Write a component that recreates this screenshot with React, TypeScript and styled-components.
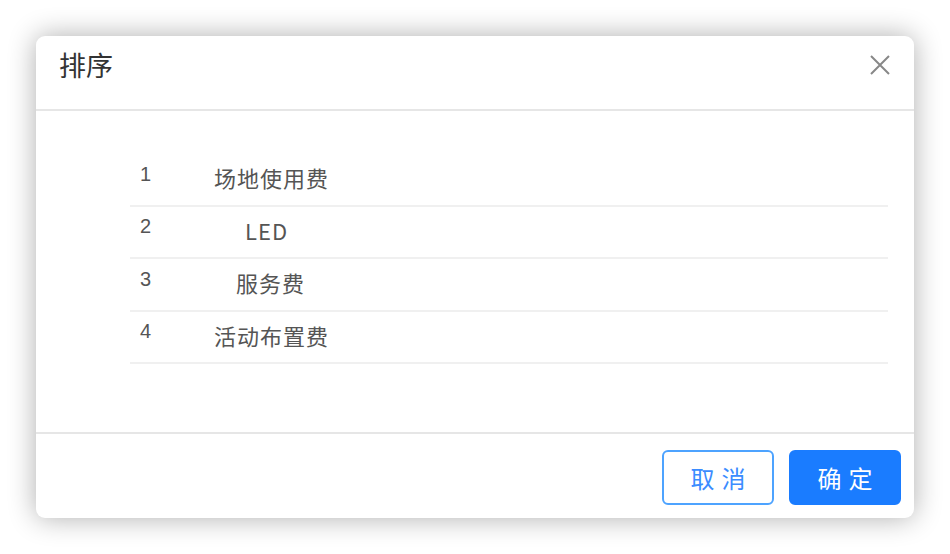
import styled, { createGlobalStyle } from 'styled-components'

const GlobalStyle = createGlobalStyle`
    html, body {
        margin: 0;
        padding: 0;
        background: #fff;
        font-family: "Noto Sans CJK SC", "Noto Sans", sans-serif;
    }
`

const Page = styled.div`
    width: 950px;
    height: 554px;
    padding: 36px;
    box-sizing: border-box;
`

const Dialog = styled.div`
    width: 878px;
    height: 482px;
    background: #fff;
    border-radius: 9px;
    box-shadow: 0 0 28px rgba(0, 0, 0, 0.32);
    display: flex;
    flex-direction: column;
    overflow: hidden;
`

const Header = styled.div`
    height: 75px;
    padding: 10px 22px 0 23px;
    box-sizing: border-box;
    border-bottom: 2px solid #e6e6e6;
    display: flex;
    align-items: flex-start;
    justify-content: space-between;

    h2 {
        margin: 0;
        font-size: 27px;
        line-height: 38px;
        font-weight: 400;
        color: #333;
    }
`

const CloseButton = styled.button`
    border: none;
    background: none;
    padding: 0;
    margin-top: 7px;
    width: 24px;
    height: 24px;
    cursor: pointer;
    color: #888;
`

const Body = styled.div`
    flex: 1;
    padding: 43px 26px 0 94px;
`

const Row = styled.div`
    height: 50.5px;
    border-bottom: 2px solid #f0f0f0;
    display: flex;
    align-items: center;
    font-size: 22px;
    color: #555;
`

const Index = styled.span`
    width: 74px;
    padding-left: 10px;
    margin-bottom: 10px;
    font-family: "Liberation Sans", "Noto Sans", sans-serif;
    font-size: 20px;
`

const Name = styled.span<{ $indent: number }>`
    padding-left: ${p => p.$indent}px;
    margin-bottom: 4px;
    letter-spacing: 1px;
`

const Footer = styled.div`
    height: 86px;
    border-top: 2px solid #e6e6e6;
    box-sizing: border-box;
    padding: 16px 13px 0 0;
    display: flex;
    justify-content: flex-end;
    align-items: flex-start;
    gap: 15px;
`

const Button = styled.button<{ $primary?: boolean }>`
    width: 112px;
    height: 55px;
    border-radius: 6px;
    font-family: "Noto Sans CJK SC", sans-serif;
    font-size: 24px;
    letter-spacing: 7px;
    text-indent: 7px;
    cursor: pointer;
    border: 2px solid ${p => (p.$primary ? '#1a7cff' : '#4da3ff')};
    background: ${p => (p.$primary ? '#1a7cff' : '#fff')};
    color: ${p => (p.$primary ? '#fff' : '#3b8cff')};
`

const items = [
    { name: '场地使用费', indent: 0 },
    { name: 'LED', indent: 31 },
    { name: '服务费', indent: 22 },
    { name: '活动布置费', indent: 0 },
]

const App = () => {
    return (
        <Page>
            <GlobalStyle />
            <Dialog>
                <Header>
                    <h2>排序</h2>
                    <CloseButton>
                        <svg width="24" height="24" viewBox="0 0 24 24" fill="none" stroke="currentColor" strokeWidth="2">
                            <path d="M3 3l18 18M21 3L3 21" />
                        </svg>
                    </CloseButton>
                </Header>
                <Body>
                    {items.map((item, i) => (
                        <Row key={item.name}>
                            <Index>{i + 1}</Index>
                            <Name $indent={item.indent}>{item.name}</Name>
                        </Row>
                    ))}
                </Body>
                <Footer>
                    <Button>取消</Button>
                    <Button $primary>确定</Button>
                </Footer>
            </Dialog>
        </Page>
    )
}

export default App
